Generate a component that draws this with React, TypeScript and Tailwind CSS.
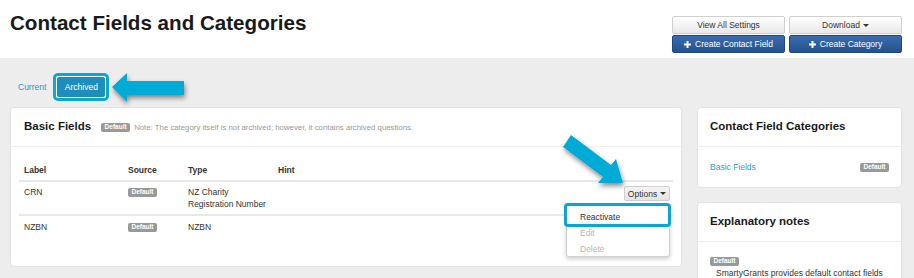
import React from "react";

function Badge({ className = "" }: { className?: string }) {
  return (
    <span
      className={`inline-flex items-center justify-center h-[9px] w-[29px] rounded-[2px] bg-[#999999] text-white font-bold text-[6.5px] leading-none ${className}`}
    >
      Default
    </span>
  );
}

function Caret() {
  return <span className="inline-block w-0 h-0 border-x-[3px] border-t-[3px] border-x-transparent border-t-[#333] ml-[3px] align-middle" />;
}

function Plus() {
  return (
    <svg width="7" height="7" viewBox="0 0 7 7" className="mr-[4px]">
      <rect x="2.5" y="0" width="2" height="7" fill="white" />
      <rect x="0" y="2.5" width="7" height="2" fill="white" />
    </svg>
  );
}

export default function App() {
  return (
    <div
      className="relative w-[914px] h-[278px] overflow-hidden bg-[#ededed] text-[#333]"
      style={{ fontFamily: '"Liberation Sans", Arial, sans-serif' }}
    >
      {/* Header */}
      <div className="h-[58px] bg-white flex justify-between pl-[10px] pr-[12px]">
        <h1 className="pt-[11px] text-[20.6px] leading-[24px] font-bold text-[#1a1a1a]">Contact Fields and Categories</h1>
        <div className="pt-[16px] grid grid-cols-[113px_113px] gap-x-[4px] gap-y-[1px] auto-rows-[18px]">
          <button className="rounded-[2px] border border-[#cfcfcf] bg-linear-to-b from-white to-[#e8e8e8] text-[8.5px] text-[#333] flex items-center justify-center">
            View All Settings
          </button>
          <button className="rounded-[2px] border border-[#cfcfcf] bg-linear-to-b from-white to-[#e8e8e8] text-[8.5px] text-[#333] flex items-center justify-center">
            Download
            <Caret />
          </button>
          <button className="rounded-[2px] border border-[#1d4884] bg-linear-to-b from-[#3a6cae] to-[#23528f] text-[8.5px] text-white flex items-center justify-center">
            <Plus />
            Create Contact Field
          </button>
          <button className="rounded-[2px] border border-[#1d4884] bg-linear-to-b from-[#3a6cae] to-[#23528f] text-[8.5px] text-white flex items-center justify-center">
            <Plus />
            Create Category
          </button>
        </div>
      </div>

      {/* Body */}
      <div className="pl-[10px] pr-[12px]">
        <div className="flex gap-[15px]">
          {/* Left column */}
          <div className="w-[672px]">
            <div className="pt-[15px] flex items-center h-[43px]">
              <span className="ml-[8px] text-[8.5px] text-[#1e98c8]">Current</span>
              <div className="ml-[7px] rounded-[5px] border-[3px] border-[#0aa7d3] bg-white p-[1px]">
                <div className="w-[48px] h-[20px] rounded-[2px] bg-[#1d8dbc] text-white text-[8.5px] flex items-center justify-center">
                  Archived
                </div>
              </div>
            </div>
            <div className="mt-[6px] h-[160px] bg-white rounded-[4px] border border-[#e2e2e2]">
              <div className="h-[39px] border-b border-[#eeeeee] flex items-center px-[13px]">
                <span className="text-[11.5px] font-bold text-[#1a1a1a]">Basic Fields</span>
                <Badge className="ml-[10px] mt-[1px]" />
                <span className="ml-[4px] mt-[1px] text-[7.8px] text-[#999]">
                  Note: The category itself is not archived; however, it contains archived questions.
                </span>
              </div>
              <div className="mx-[8px] pt-[14px] text-[8.5px]">
                <div className="flex h-[21px] items-center border-b-2 border-[#e8e8e8] font-bold text-[#333]">
                  <div className="w-[109px] pl-[5px]">Label</div>
                  <div className="w-[60px]">Source</div>
                  <div className="w-[90px]">Type</div>
                  <div className="flex-1">Hint</div>
                </div>
                <div className="flex h-[34px] border-b-2 border-[#e8e8e8] leading-[12px]">
                  <div className="w-[109px] pl-[5px] pt-[4px]">CRN</div>
                  <div className="w-[60px] pt-[6px] flex items-start">
                    <Badge />
                  </div>
                  <div className="w-[90px] pt-[4px]">
                    NZ Charity
                    <br />
                    Registration Number
                  </div>
                  <div className="flex-1" />
                  <div className="relative pt-[4px] pr-[3px]">
                    <button className="h-[15px] w-[46px] rounded-[2px] border border-[#cfcfcf] bg-linear-to-b from-[#f5f5f5] to-[#e4e4e4] text-[8.5px] text-[#333] flex items-center justify-center">
                      Options
                      <Caret />
                    </button>
                    <div className="absolute right-[3px] top-[22px] w-[104px] h-[53px] rounded-[3px] border border-[#d0d0d0] bg-white shadow-[0_2px_4px_rgba(0,0,0,0.2)]">
                      <div className="absolute -left-[3px] -right-[2px] -top-[2px] h-[24px] rounded-[4px] border-[3px] border-[#0aa7d3]" />
                      <div className="pl-[13px] pt-[5px] text-[8.5px] text-[#333] leading-[15px]">Reactivate</div>
                      <div className="pl-[13px] text-[8.5px] text-[#b5b5b5] leading-[16px]">Edit</div>
                      <div className="pl-[13px] text-[8.5px] text-[#b5b5b5] leading-[16px]">Delete</div>
                    </div>
                  </div>
                </div>
                <div className="flex h-[30px] leading-[12px]">
                  <div className="w-[109px] pl-[5px] pt-[5px]">NZBN</div>
                  <div className="w-[60px] pt-[7px] flex items-start">
                    <Badge />
                  </div>
                  <div className="w-[90px] pt-[5px]">NZBN</div>
                </div>
              </div>
            </div>
          </div>

          {/* Right column */}
          <div className="w-[205px] pt-[49px] flex flex-col gap-[14px]">
            <div className="h-[81px] bg-white rounded-[4px] border border-[#e2e2e2]">
              <div className="h-[39px] border-b border-[#eeeeee] flex items-center px-[12px]">
                <span className="text-[11.5px] font-bold text-[#1a1a1a]">Contact Field Categories</span>
              </div>
              <div className="h-[41px] flex items-center justify-between pl-[12px] pr-[12px]">
                <span className="text-[8.5px] text-[#2a9fd3]">Basic Fields</span>
                <Badge />
              </div>
            </div>
            <div className="h-[100px] bg-white rounded-[4px] border border-[#e2e2e2]">
              <div className="h-[39px] border-b border-[#eeeeee] flex items-center px-[12px]">
                <span className="text-[11.5px] font-bold text-[#1a1a1a]">Explanatory notes</span>
              </div>
              <div className="pl-[12px] pt-[15px] flex flex-col items-start">
                <Badge />
                <div className="pl-[6px] pt-[1px] text-[8.5px] leading-[12px] text-[#333]">
                  SmartyGrants provides default contact fields
                </div>
              </div>
            </div>
          </div>
        </div>
      </div>

      {/* Annotation arrows */}
      <svg className="absolute left-0 top-0 pointer-events-none" width="914" height="278">
        <defs>
          <filter id="sh" x="-30%" y="-30%" width="160%" height="160%">
            <feDropShadow dx="1" dy="3" stdDeviation="2.5" floodColor="#000" floodOpacity="0.45" />
          </filter>
        </defs>
        <polygon
          points="112,87 127,73 127,81 184,81 184,95 127,95 127,102"
          fill="#05abd6"
          filter="url(#sh)"
        />
        <polygon
          points="571,135 611,165 616,159 623,183 598,183 603,177 563,147"
          fill="#05abd6"
          filter="url(#sh)"
        />
      </svg>
    </div>
  );
}
